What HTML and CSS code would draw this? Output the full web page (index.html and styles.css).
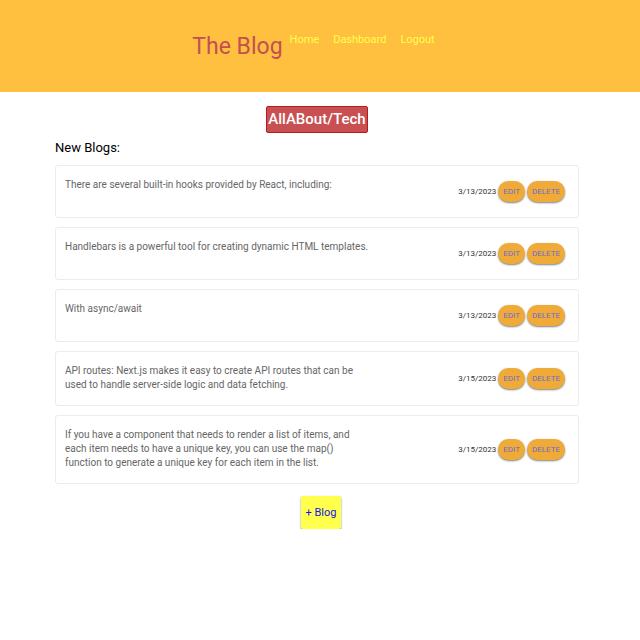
FILE: index.html
```
<!DOCTYPE html>
<html lang="en">
<head>
<meta charset="utf-8">
<meta name="viewport" content="width=device-width, initial-scale=1">
<title>The Blog</title>
<link rel="stylesheet" href="styles.css">
</head>
<body>
<header class="site-header">
  <h1 class="brand">The Blog</h1>
  <nav class="nav">
    <a href="#">Home</a>
    <a href="#">Dashboard</a>
    <a href="#">Logout</a>
  </nav>
</header>
<main class="content">
  <h2 class="badge">AllABout/Tech</h2>
  <h3 class="section-title">New Blogs:</h3>
  <ul class="posts">
    <li class="post">
      <p class="post-text">There are several built-in hooks provided by React, including:</p>
      <div class="post-meta"><time>3/13/2023</time><button class="pill" type="button">EDIT</button><button class="pill" type="button">DELETE</button></div>
    </li>
    <li class="post">
      <p class="post-text">Handlebars is a powerful tool for creating dynamic HTML templates.</p>
      <div class="post-meta"><time>3/13/2023</time><button class="pill" type="button">EDIT</button><button class="pill" type="button">DELETE</button></div>
    </li>
    <li class="post">
      <p class="post-text">With async/await</p>
      <div class="post-meta"><time>3/13/2023</time><button class="pill" type="button">EDIT</button><button class="pill" type="button">DELETE</button></div>
    </li>
    <li class="post">
      <p class="post-text">API routes: Next.js makes it easy to create API routes that can be used to handle server-side logic and data fetching.</p>
      <div class="post-meta"><time>3/15/2023</time><button class="pill" type="button">EDIT</button><button class="pill" type="button">DELETE</button></div>
    </li>
    <li class="post">
      <p class="post-text">If you have a component that needs to render a list of items, and each item needs to have a unique key, you can use the map() function to generate a unique key for each item in the list.</p>
      <div class="post-meta"><time>3/15/2023</time><button class="pill" type="button">EDIT</button><button class="pill" type="button">DELETE</button></div>
    </li>
  </ul>
  <button class="add" type="button">+ Blog</button>
</main>
</body>
</html>
```
FILE: styles.css
```
* {
  box-sizing: border-box;
}

body {
  margin: 0;
  background: #fff;
  color: #000;
  font-family: Roboto, "Liberation Sans", sans-serif;
}

h1, h2, h3, p, ul {
  margin: 0;
  padding: 0;
  font-weight: 400;
}

.site-header {
  display: flex;
  justify-content: center;
  align-items: flex-start;
  gap: 7px;
  padding: 30px 13px 28px 0;
  background: #ffc040;
}

.brand {
  color: #c44f51;
  font-size: 23px;
  line-height: 34px;
}

.nav {
  display: flex;
  gap: 14px;
  font-size: 11px;
  line-height: 20px;
}

.nav a {
  color: #ffff4d;
  text-decoration: none;
}

.content {
  display: flex;
  flex-direction: column;
  margin: 0 61px 0 55px;
  padding-top: 14px;
}

.badge {
  align-self: center;
  padding: 0 1px;
  border: 1px solid #b71c1c;
  border-radius: 2px;
  background: #c85052;
  color: #fff;
  font-size: 15px;
  font-weight: 500;
  line-height: 25px;
}

.section-title {
  margin: 5px 0 7px;
  font-size: 13px;
  line-height: 20px;
}

.posts {
  display: grid;
  gap: 9px;
  list-style: none;
}

.post {
  display: flex;
  justify-content: space-between;
  align-items: center;
  min-height: 53px;
  padding: 12px 13px 13px 9px;
  border: 1px solid #ececec;
  border-radius: 3px;
}

.post-text {
  align-self: flex-start;
  max-width: 306px;
  color: #666;
  font-size: 10px;
  line-height: 14px;
}

.post-meta {
  display: flex;
  align-items: center;
  gap: 2px;
  color: #333;
  font-size: 8px;
  white-space: nowrap;
}

.pill {
  height: 21px;
  padding: 0 5px;
  border: 0;
  border-radius: 11px;
  background: #f0aa38;
  box-shadow: 0 1px 2px rgba(0, 0, 0, 0.5);
  color: #6c6cd0;
  font: inherit;
}

.add {
  align-self: center;
  height: 33px;
  margin: 12px 0 0 8px;
  padding: 0 5px;
  border: 0;
  border-radius: 2px;
  background: #ffff4d;
  box-shadow: 0 1px 2px rgba(0, 0, 0, 0.5);
  color: #1414e6;
  font: inherit;
  font-size: 11px;
}
```
